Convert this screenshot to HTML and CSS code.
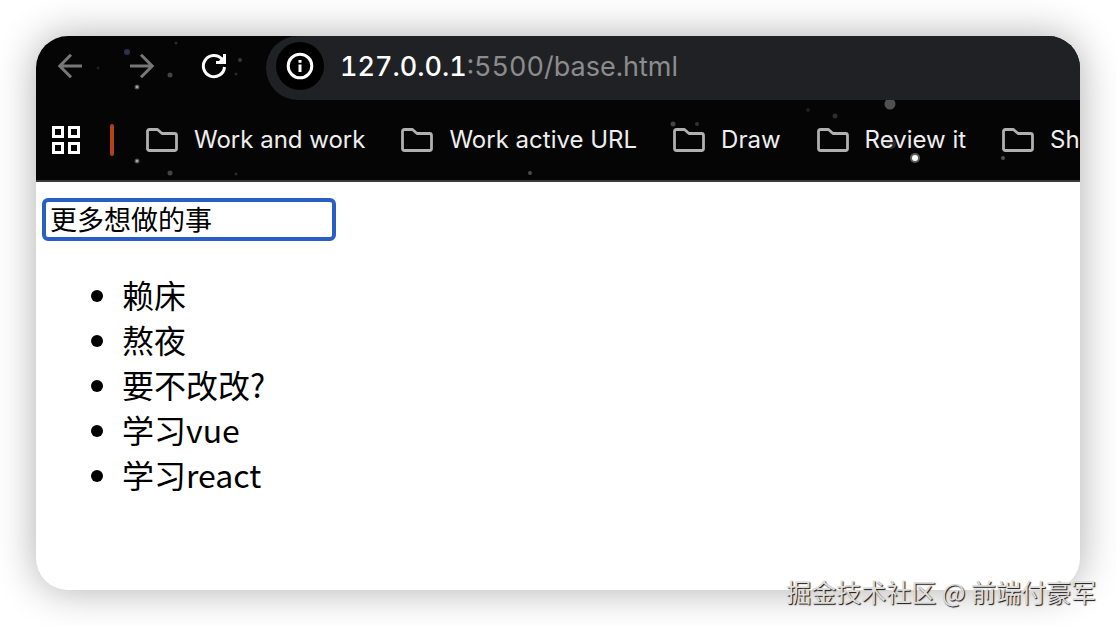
FILE: index.html
```
<!DOCTYPE html>
<html lang="zh-CN">
<head>
<meta charset="utf-8">
<meta name="viewport" content="width=device-width, initial-scale=1">
<title>base.html</title>
<link rel="stylesheet" href="styles.css">
</head>
<body>
<svg class="defs" aria-hidden="true">
  <symbol id="folder" viewBox="0 0 32 24"><path d="M3.500 1.500H11.500L16 5.500H28.500Q30.500 5.500 30.500 7.500V20.500Q30.500 22.500 28.500 22.500H3.500Q1.500 22.500 1.500 20.500V3.500Q1.500 1.500 3.500 1.500Z" fill="none" stroke="currentColor" stroke-width="2.800" stroke-linejoin="round"/></symbol>
</svg>
<main class="window">
  <header class="chrome">
    <svg class="stars" width="1044" height="144" aria-hidden="true">
      <g fill="#fff">
        <circle cx="91" cy="16" r="3" fill="#8080d0" opacity=".35"/>
        <circle cx="101" cy="51" r="2.500" opacity=".3"/><circle cx="101" cy="51" r="1.300" opacity=".5"/>
        <circle cx="134" cy="39" r="2.500" opacity=".25"/>
        <circle cx="204" cy="24" r="2" opacity=".2"/>
        <circle cx="200" cy="38" r="1.500" opacity=".15"/>
        <circle cx="62" cy="32" r="1.500" opacity=".1"/>
        <circle cx="140" cy="7" r="1.500" opacity=".15"/>
        <circle cx="101" cy="125" r="2.500" opacity=".3"/><circle cx="101" cy="125" r="1.300" opacity=".5"/>
        <circle cx="134" cy="137" r="2.500" opacity=".25"/>
        <circle cx="200" cy="138" r="1.500" opacity=".15"/>
        <circle cx="494" cy="137" r="2" opacity=".28"/>
        <circle cx="637" cy="88" r="2.500" opacity=".25"/>
        <circle cx="661" cy="88" r="2" opacity=".18"/>
        <circle cx="799" cy="80" r="2.500" opacity=".16"/>
        <circle cx="772" cy="74" r="2" opacity=".1"/>
        <circle cx="854" cy="68" r="5.500" opacity=".3"/>
        <circle cx="855" cy="108" r="5" opacity=".15"/>
        <circle cx="879" cy="122" r="5" opacity=".35"/><circle cx="879" cy="122" r="3"/>
        <circle cx="967" cy="122" r="2" opacity=".3"/>
      </g>
    </svg>
    <div class="toolbar">
      <nav class="controls" aria-label="Navigation">
        <button class="control dim" aria-label="Back"><svg width="28" height="28" viewBox="0 0 28 28"><path d="M26 14H4M15 2.800L3.800 14L15 25.200"/></svg></button>
        <button class="control dim" aria-label="Forward"><svg width="28" height="28" viewBox="0 0 28 28"><path d="M2 14H24M13 2.800L24.200 14L13 25.200"/></svg></button>
        <button class="control" aria-label="Reload"><svg width="28" height="28" viewBox="0 0 28 28"><path d="M24.500 15A10.600 10.600 0 1 1 22 7.200M16 10.500H24.500V2"/><path d="M19 9L24 4V10Z" fill="currentColor" stroke="none"/></svg></button>
      </nav>
      <div class="address">
        <button class="info" aria-label="Site information"><svg width="28" height="28" viewBox="0 0 28 28"><circle cx="14" cy="14" r="11.800"/><path d="M14 12.500V20M14 8V10.800"/></svg></button>
        <span class="url"><b class="host">127.0.0.1</b>:5500/base.html</span>
      </div>
    </div>
    <nav class="bookmarks" aria-label="Bookmarks">
      <button class="apps" aria-label="Apps"><svg width="28" height="28" viewBox="0 0 28 28"><path d="M1.500 1.500H10.500V10.500H1.500ZM17.500 1.500H26.500V10.500H17.500ZM1.500 17.500H10.500V26.500H1.500ZM17.500 17.500H26.500V26.500H17.500Z"/></svg></button>
      <span class="divider"></span>
      <div class="folders">
        <button class="folder"><svg width="32" height="24"><use href="#folder"/></svg>Work and work</button>
        <button class="folder"><svg width="32" height="24"><use href="#folder"/></svg>Work active URL</button>
        <button class="folder"><svg width="32" height="24"><use href="#folder"/></svg>Draw</button>
        <button class="folder"><svg width="32" height="24"><use href="#folder"/></svg>Review it</button>
        <button class="folder"><svg width="32" height="24"><use href="#folder"/></svg>Sh</button>
      </div>
    </nav>
  </header>
  <section class="page">
    <input class="todo-input" type="text" value="更多想做的事" aria-label="更多想做的事">
    <ul class="todos">
      <li>赖床</li>
      <li>熬夜</li>
      <li>要不改改?</li>
      <li>学习vue</li>
      <li>学习react</li>
    </ul>
  </section>
</main>
<div class="watermark">掘金技术社区 @ 前端付豪军</div>
</body>
</html>
```

FILE: styles.css
```
* {
  box-sizing: border-box;
}

body {
  margin: 0;
  min-height: 100vh;
  padding: 36px;
  display: flex;
  background: #fff;
  color: #000;
  font-family: Inter, "Noto Sans CJK SC", sans-serif;
}

button {
  padding: 0;
  border: 0;
  background: none;
  color: #fff;
  font: inherit;
}

svg {
  display: block;
  flex: none;
}

.defs {
  position: absolute;
  width: 0;
  height: 0;
}

.window {
  flex: 1;
  min-width: 0;
  overflow: hidden;
  border-radius: 32px;
  background: #fff;
  box-shadow: 0 0 40px rgba(0, 0, 0, 0.32);
}

.chrome {
  position: relative;
  overflow: hidden;
  border-bottom: 2px solid #3c3a3b;
  background: #050505;
}

.stars {
  position: absolute;
  top: 0;
  left: 0;
}

.toolbar {
  position: relative;
  display: flex;
  height: 64px;
}

.controls {
  display: flex;
  flex: none;
  align-items: center;
  gap: 44px;
  width: 230px;
  padding: 0 0 4px 20px;
}

.control svg,
.info svg,
.apps svg {
  fill: none;
  stroke: currentColor;
  stroke-width: 3;
}

.control.dim {
  color: #777;
}

.address {
  display: flex;
  flex: 1;
  align-items: center;
  gap: 16px;
  padding: 0 0 4px 10px;
  border-radius: 32px 0 0 32px;
  background: #202124;
}

.info {
  display: grid;
  place-items: center;
  width: 48px;
  height: 48px;
  border-radius: 50%;
  background: #000;
}

.url {
  padding-top: 2px;
  color: #8c8c8d;
  font-size: 27px;
  font-variant-numeric: tabular-nums;
  line-height: 32px;
}

.host {
  color: #fff;
  font-weight: 500;
}

.bookmarks {
  position: relative;
  display: flex;
  align-items: center;
  height: 80px;
  padding-left: 16px;
}

.divider {
  flex: none;
  width: 4px;
  height: 32px;
  margin: 0 32px 0 30px;
  border-radius: 2px;
  background: #b3401c;
}

.folders {
  display: flex;
  gap: 36px;
}

.folder {
  display: flex;
  flex: none;
  align-items: center;
  gap: 16px;
  color: #eee;
  font-size: 24px;
  line-height: 32px;
  white-space: nowrap;
}

.folder svg {
  color: #b0b0b0;
}

.page {
  padding: 16px 6px;
}

.todo-input {
  display: block;
  width: 294px;
  height: 43px;
  padding: 0 4px 2px;
  border: 4px solid #295fc3;
  border-radius: 6px;
  outline: none;
  background: #fff;
  color: #000;
  font-family: "Noto Sans CJK SC", sans-serif;
  font-size: 27px;
}

.todos {
  margin: 31px 0 0;
  padding-left: 80px;
  font-family: "Noto Sans CJK SC", sans-serif;
  font-size: 32px;
  line-height: 45px;
}

.watermark {
  position: absolute;
  right: 20px;
  bottom: 18px;
  color: #ddd;
  font-family: "Noto Sans CJK SC", sans-serif;
  font-size: 25px;
  line-height: 34px;
  text-shadow: 1px 1px 1px #111;
}
```
